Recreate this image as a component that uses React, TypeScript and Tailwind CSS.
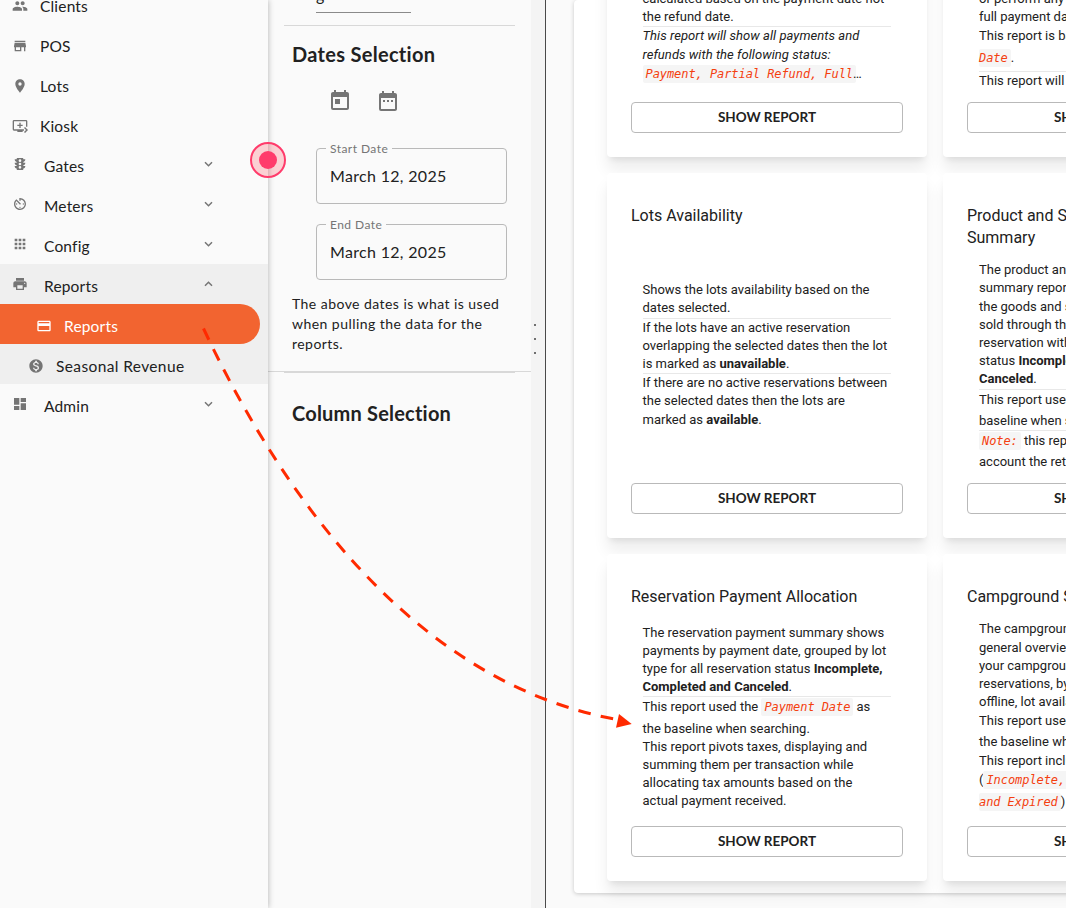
import type { ReactNode } from "react";
import type { IconType } from "react-icons";
import {
  MdApps,
  MdAvTimer,
  MdCreditCard,
  MdDashboard,
  MdDateRange,
  MdLocationOn,
  MdMonetizationOn,
  MdPeople,
  MdPrint,
  MdQueuePlayNext,
  MdStore,
  MdToday,
  MdTraffic,
} from "react-icons/md";

const Chevron = ({ up = false }: { up?: boolean }) => (
  <svg
    width="9"
    height="6"
    viewBox="0 0 9 6"
    fill="none"
    stroke="#757575"
    strokeWidth="1.5"
    className="mb-1"
  >
    <path d={up ? "M1 4.800l3.500-3.500 3.500 3.500" : "M1 1.200l3.500 3.500 3.500-3.500"} />
  </svg>
);

const NavLink = ({ icon: Icon, label }: { icon: IconType; label: string }) => (
  <div className="flex h-10 items-center pt-1 pl-3">
    <Icon size={16} color="#757575" />
    <span className="ml-3">{label}</span>
  </div>
);

const NavGroup = ({
  icon: Icon,
  label,
  open = false,
}: {
  icon: IconType;
  label: string;
  open?: boolean;
}) => (
  <div className="flex h-10 items-center pt-1 pr-[55.5px] pl-3">
    <Icon size={16} color="#757575" className="mb-[5px]" />
    <span className="ml-4 flex-1">{label}</span>
    <Chevron up={open} />
  </div>
);

const DateField = ({ label, value }: { label: string; value: string }) => (
  <fieldset className="h-[63px] w-[191px] rounded-[4px] border border-[#b9b9b9] pl-[9px]">
    <legend className="px-1 text-[12px] leading-[14px] tracking-[0.45px] text-[#757575]">
      <span className="relative top-px">{label}</span>
    </legend>
    <div className="pt-[9px] pl-1 text-[16px] leading-6 tracking-[0.32px]">{value}</div>
  </fieldset>
);

const Line = ({ children, className = "h-[18.2px]" }: { children: ReactNode; className?: string }) => (
  <p className={`leading-[18.2px] whitespace-pre ${className}`}>{children}</p>
);

const Rule = () => <div className="h-px w-[248px] bg-[#e8e8e8]" />;

// wrapped: second half of a code span that continues from the line above
const Code = ({ children, wrapped = false }: { children: ReactNode; wrapped?: boolean }) => (
  <code
    className={`rounded-[2px] bg-[#f5f5f5] py-[2px] pr-[3px] font-['DejaVu_Sans_Mono',monospace] text-[12px] leading-none tracking-[-0.07px] text-[#f4400f] italic ${wrapped ? "" : "pl-[3px]"}`}
  >
    {children}
  </code>
);

const ReportCard = ({
  title,
  className,
  bodyClass,
  children,
}: {
  title?: ReactNode;
  className: string;
  bodyClass: string;
  children: ReactNode;
}) => (
  <section
    className={`flex w-80 shrink-0 flex-col rounded-[4px] bg-white px-6 pb-6 shadow-[0_5px_6px_-3px_rgba(0,0,0,0.09),0_13px_15px_rgba(0,0,0,0.07)] ${className}`}
  >
    <h3 className="h-[77px] shrink-0 pt-8 text-[16px] leading-[22px] whitespace-nowrap">
      {title}
    </h3>
    <div className={`flex-1 text-[13px] ${bodyClass}`}>{children}</div>
    <button className="h-[31px] shrink-0 rounded-[4px] border border-[#b9b9b9] font-['Lato',sans-serif] text-[13.5px] font-bold">
      SHOW REPORT
    </button>
  </section>
);

const Sidebar = () => (
  <nav className="z-10 w-[268px] shrink-0 bg-[#fafafa] text-[15.5px] leading-[25px] tracking-[0.18px] shadow-[0_0_6px_rgba(0,0,0,0.3)]">
    <div className="-mt-4">
      <NavLink icon={MdPeople} label="Clients" />
      <NavLink icon={MdStore} label="POS" />
      <NavLink icon={MdLocationOn} label="Lots" />
      <NavLink icon={MdQueuePlayNext} label="Kiosk" />
      <NavGroup icon={MdTraffic} label="Gates" />
      <NavGroup icon={MdAvTimer} label="Meters" />
      <NavGroup icon={MdApps} label="Config" />
      <div className="bg-[#efefef]">
        <NavGroup icon={MdPrint} label="Reports" open />
        <div className="mr-2 flex h-10 items-center rounded-r-full bg-[#f26430] pt-1 pl-9 text-white">
          <MdCreditCard size={16} />
          <span className="ml-3">Reports</span>
        </div>
        <div className="flex h-10 items-center pt-1 pl-7">
          <MdMonetizationOn size={16} color="#757575" />
          <span className="ml-3 tracking-[0.38px]">Seasonal Revenue</span>
        </div>
      </div>
      <NavGroup icon={MdDashboard} label="Admin" />
    </div>
  </nav>
);

const FilterPanel = () => (
  <aside className="w-[263px] shrink-0">
    <div className="h-[371px] px-4">
      <div className="flex h-[13px] items-end pl-8">
        <div className="h-[13px] w-[95px] overflow-hidden border-b border-[#8a8a8a] text-[16px] leading-[16px]">
          <span className="relative -top-[13px]">g</span>
        </div>
      </div>
      <div className="mt-3 h-px bg-[#d8d8d8]" />
      <div className="px-2">
        <h2 className="mt-4 text-[20px] leading-6 font-bold tracking-[0.3px]">Dates Selection</h2>
        <div className="mt-[23px] flex gap-6 pl-9 text-[#757575]">
          <MdToday size={24} />
          <MdDateRange size={24} />
        </div>
        <div className="mt-[28px] flex flex-col gap-[13px] pl-6">
          <DateField label="Start Date" value="March 12, 2025" />
          <DateField label="End Date" value="March 12, 2025" />
        </div>
        <p className="mt-[14px] text-[14px] leading-5 tracking-[0.45px] whitespace-nowrap">
          The above dates is what is used
          <br />
          when pulling the data for the
          <br />
          reports.
        </p>
      </div>
    </div>
    <div className="h-px bg-[#d8d8d8]" />
    <div className="mx-4 h-px bg-[#d8d8d8]" />
    <h2 className="mt-7 pl-6 text-[20px] leading-6 font-bold tracking-[0.2px]">
      Column Selection
    </h2>
  </aside>
);

const Splitter = () => (
  <div className="flex w-[15px] shrink-0 flex-col gap-3 border-r border-[#4a4a4a] bg-[#f4f4f4] pt-[324px] pl-[3px]">
    <i className="size-[2px] rounded-full bg-[#444]" />
    <i className="size-[2px] rounded-full bg-[#444]" />
    <i className="size-[2px] rounded-full bg-[#444]" />
  </div>
);

const Reports = () => (
  <main className="min-w-0 flex-1 pl-7 font-['Roboto',sans-serif]">
    <div className="flex h-[893px] w-[800px] flex-col gap-4 rounded-[4px] bg-white pl-[33px] shadow-[0_1px_4px_rgba(0,0,0,0.2)]">
      <div className="-mt-[100px] flex gap-4">
        <ReportCard className="h-[257px]" bodyClass="pt-[12.8px] pl-[11.5px]">
          <Line>calculated based on the payment date not</Line>
          <Line>the refund date.</Line>
          <Rule />
          <Line className="h-[18.8px] tracking-[0.05px] italic">
            This report will show all payments and
          </Line>
          <Line className="h-[19.2px] tracking-[0.05px] italic">
            refunds with the following status:
          </Line>
          <Line>
            <Code>Payment, Partial Refund, Full</Code>
            <span className="-ml-[3px]">…</span>
          </Line>
        </ReportCard>
        <ReportCard className="h-[257px]" bodyClass="pt-[13px] pl-3">
          <Line>or perform any booking with a</Line>
          <Line className="h-[18.8px]">full payment date.</Line>
          <Line className="h-[22px]">This report is based on the</Line>
          <Line className="h-[22px]">
            <Code wrapped>Date</Code>.
          </Line>
          <Rule />
          <Line>This report will show all</Line>
        </ReportCard>
      </div>

      <div className="flex gap-4">
        <ReportCard title="Lots Availability" className="h-[365px]" bodyClass="pt-[31.2px] pl-[11.5px]">
          <Line>Shows the lots availability based on the</Line>
          <Line>dates selected.</Line>
          <Rule />
          <Line>If the lots have an active reservation</Line>
          <Line>overlapping the selected dates then the lot</Line>
          <Line>
            is marked as <b>unavailable</b>.
          </Line>
          <Rule />
          <Line>If there are no active reservations between</Line>
          <Line>the selected dates then the lots are</Line>
          <Line>
            marked as <b>available</b>.
          </Line>
        </ReportCard>
        <ReportCard
          title={
            <>
              Product and Service
              <br />
              Summary
            </>
          }
          className="h-[365px]"
          bodyClass="pt-[11.2px] pl-3"
        >
          <Line>The product and service</Line>
          <Line>summary report shows all</Line>
          <Line>the goods and services</Line>
          <Line>sold through the</Line>
          <Line>reservation with</Line>
          <Line>
            status <b>Incomplete, Completed,</b>
          </Line>
          <Line>
            <b>Canceled</b>.
          </Line>
          <Rule />
          <Line className="h-[22px] pt-[1.4px]">This report used the</Line>
          <Line className="h-[18.4px] pt-[0.6px]">baseline when searching.</Line>
          <Rule />
          <Line className="h-[21.8px] pt-[1.2px]">
            <Code>Note:</Code> this report takes into
          </Line>
          <Line>account the returned items.</Line>
        </ReportCard>
      </div>

      <div className="flex gap-4">
        <ReportCard
          title="Reservation Payment Allocation"
          className="h-[327px]"
          bodyClass="-mt-[7.4px] pl-[11.5px]"
        >
          <Line>The reservation payment summary shows</Line>
          <Line>payments by payment date, grouped by lot</Line>
          <Line>
            type for all reservation status <b>Incomplete,</b>
          </Line>
          <Line>
            <b>Completed and Canceled</b>.
          </Line>
          <Rule />
          <Line className="h-[22px] pt-[0.8px]">
            This report used the <Code>Payment Date</Code> as
          </Line>
          <Line className="h-[18.2px] pt-[0.6px]">the baseline when searching.</Line>
          <Line>This report pivots taxes, displaying and</Line>
          <Line>summing them per transaction while</Line>
          <Line>allocating tax amounts based on the</Line>
          <Line>actual payment received.</Line>
        </ReportCard>
        <ReportCard title="Campground Summary" className="h-[327px]" bodyClass="-mt-[10.7px] pl-3">
          <Line>The campground summary is a</Line>
          <Line>general overview of</Line>
          <Line>your campground</Line>
          <Line>reservations, by online and</Line>
          <Line>offline, lot availability.</Line>
          <Line className="h-[21.8px] pt-[0.4px]">This report used the</Line>
          <Line className="h-[18.8px]">the baseline when searching.</Line>
          <Line className="h-[19.2px]">This report includes</Line>
          <Line className="h-[22px]">
            (<Code>Incomplete, Completed</Code>
          </Line>
          <Line>
            <Code wrapped>and Expired</Code>)
          </Line>
        </ReportCard>
      </div>
    </div>
  </main>
);

const App = () => (
  <div className="relative flex h-[908px] w-[1066px] overflow-hidden bg-[#fafafa] font-['Lato',sans-serif] text-[#212121]">
    <Sidebar />
    <FilterPanel />
    <Splitter />
    <Reports />
    <svg
      className="pointer-events-none absolute inset-0 z-20"
      width="1066"
      height="908"
      viewBox="0 0 1066 908"
      fill="none"
    >
      <circle cx="268" cy="160" r="17" fill="#ff3b4b" fillOpacity="0.22" stroke="#ff3b6b" strokeWidth="2" />
      <circle cx="268" cy="160" r="9" fill="#ff3b6b" />
      <path
        d="M203.500 328.500C270 470 400 680 617 719.500"
        stroke="#ff2a00"
        strokeWidth="3"
        strokeDasharray="12.700 10.280"
      />
      <path d="M619 714l12.700 10-15.700 3.700z" fill="#ff2a00" />
    </svg>
  </div>
);

export default App;
